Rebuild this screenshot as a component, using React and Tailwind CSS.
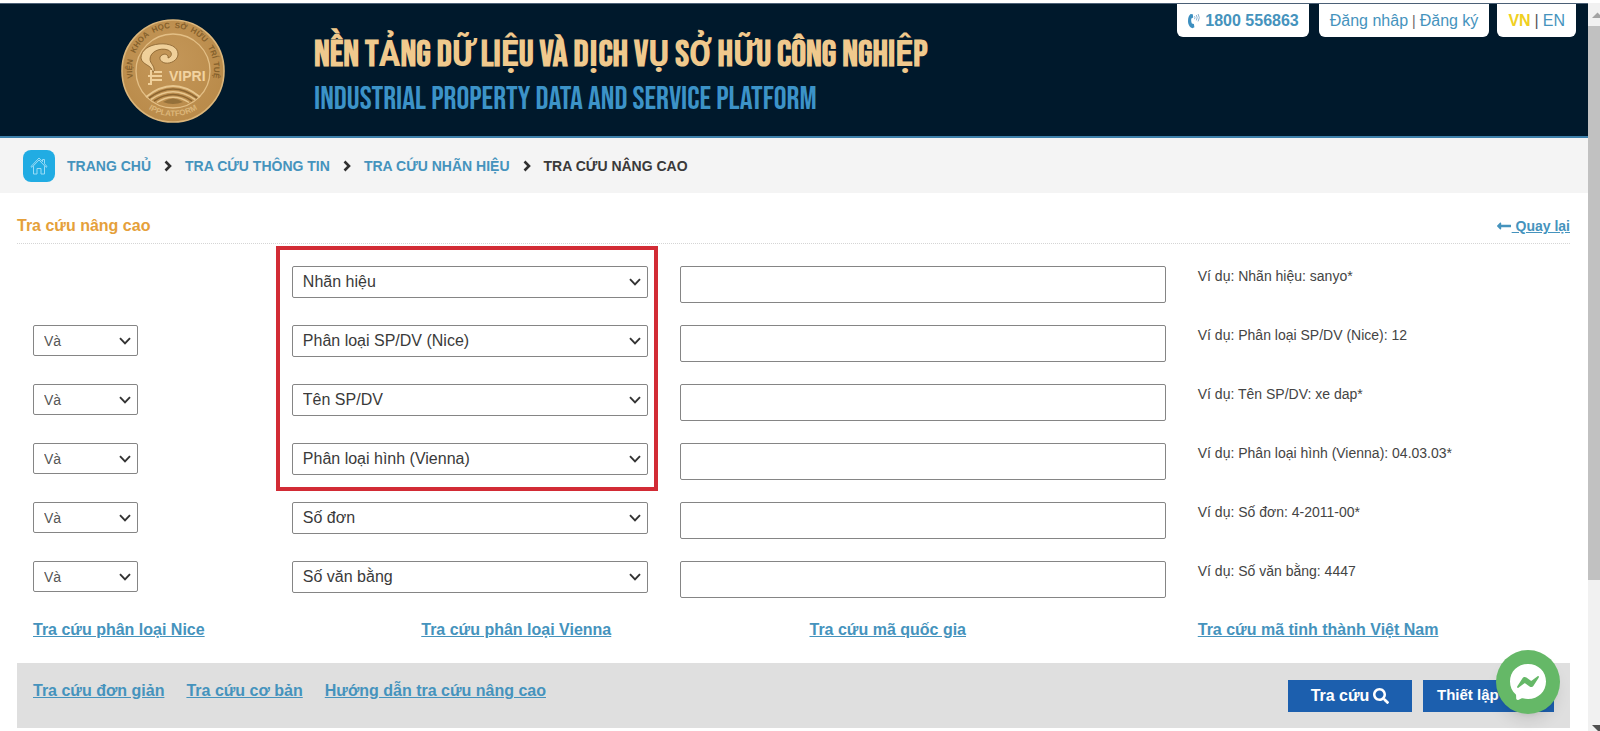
import React from "react";
import { FaLongArrowAltLeft, FaSearch, FaUndo } from "react-icons/fa";

const fields = ["Nhãn hiệu", "Phân loại SP/DV (Nice)", "Tên SP/DV", "Phân loại hình (Vienna)", "Số đơn", "Số văn bằng"];

const examples = [
  "Ví dụ: Nhãn hiệu: sanyo*",
  "Ví dụ: Phân loại SP/DV (Nice): 12",
  "Ví dụ: Tên SP/DV: xe dap*",
  "Ví dụ: Phân loại hình (Vienna): 04.03.03*",
  "Ví dụ: Số đơn: 4-2011-00*",
  "Ví dụ: Số văn bằng: 4447",
];

const lookups = ["Tra cứu phân loại Nice", "Tra cứu phân loại Vienna", "Tra cứu mã quốc gia", "Tra cứu mã tỉnh thành Việt Nam"];

const crumbs = ["TRANG CHỦ", "TRA CỨU THÔNG TIN", "TRA CỨU NHÃN HIỆU"];

const modes = ["Tra cứu đơn giản", "Tra cứu cơ bản", "Hướng dẫn tra cứu nâng cao"];

const sealWords = [
  ["VIỆN", "0%"],
  ["KHOA", "17%"],
  ["HỌC", "36%"],
  ["SỞ", "51%"],
  ["HỮU", "62%"],
  ["TRÍ", "78%"],
  ["TUỆ", "89%"],
];

function Seal() {
  return (
    <svg viewBox="0 0 104 104" className="size-[104px]" role="img" aria-label="VIPRI">
      <defs>
        <radialGradient id="bronze" cx="45%" cy="40%" r="65%">
          <stop offset="0" stopColor="#c49759" />
          <stop offset="1" stopColor="#b98a49" />
        </radialGradient>
        <path id="arcTop" d="M12 59 A41 41 0 1 1 92 59" />
        <path id="arcBottom" d="M22 86 A46 46 0 0 0 82 86" />
      </defs>
      <circle cx="52" cy="52" r="51" fill="url(#bronze)" stroke="#dcb67a" strokeWidth="1.6" />
      <circle cx="52" cy="52" r="37" fill="none" stroke="#e3bf86" strokeWidth="1.3" />
      <g fontFamily="Liberation Sans, Arial, sans-serif" fontWeight="700">
        {sealWords.map(([word, offset]) => (
          <text key={word} fontSize="8" fill="#86612c">
            <textPath href="#arcTop" startOffset={offset}>
              {word}
            </textPath>
          </text>
        ))}
        <text fontSize="8" fill="#dcb679">
          <textPath href="#arcBottom" startOffset="50%" textAnchor="middle">
            IPPLATFORM
          </textPath>
        </text>
        <text x="48" y="62" fontSize="14" fill="#f2d3a0">
          VIPRI
        </text>
      </g>
      <path
        d="M31 52 C31 46 21 46 20 39 C20 31 28 26 38 25 C49 24 57 28 57 35 C57 41 50 45 44 44 C39 43 37 38 41 36 C44 34 48 36 47 39 C51 38 52 33 47 31 C39 28 29 33 29 40 C29 45 34 46 33 53 Z"
        fill="#f0d09a"
        stroke="#85602d"
        strokeWidth="0.8"
      />
      <path d="M30 51 V65 M33 53 H41 M27 57 H41 M30 61 H41 M27 65 H31" fill="none" stroke="#f0d09a" strokeWidth="2" />
      <path d="M25 78 Q52 56 79 78" fill="none" stroke="#e8c78f" strokeWidth="1.8" />
      <path d="M28 79 Q52 61 76 79" fill="none" stroke="#8a6430" strokeWidth="1.6" />
      <path d="M30 80.500 Q52 65 74 80.500" fill="none" stroke="#e8c78f" strokeWidth="1.6" />
      <path d="M33 82 Q52 69 71 82" fill="none" stroke="#8a6430" strokeWidth="1.6" />
      <path d="M36 83.500 Q52 73 68 83.500" fill="none" stroke="#e8c78f" strokeWidth="1.4" />
      <path d="M42 83 Q52 76 62 83 Q52 87 42 83" fill="#94703a" />
    </svg>
  );
}

function HomeIcon() {
  return (
    <svg viewBox="0 0 20 20" className="size-5" fill="none" stroke="#9adcf6" strokeWidth="1" aria-hidden="true">
      <path d="M2 10.5 L10 2 L13.5 5.7 V3.5 H15.5 V7.8 L18 10.5 L17 11.3 L10 4 L3 11.3 Z" />
      <path d="M4.5 10.2 V18 H8 V12.5 H12 V18 H15.5 V10.2" />
    </svg>
  );
}

function PhoneIcon() {
  return (
    <svg viewBox="0 0 14 16" className="h-4 w-3.5" fill="none" aria-hidden="true">
      <path
        d="M3.600 1 L5.800 1.300 L6.200 4.600 L4.300 5.600 C4 7.400 4.200 9 4.900 10.600 L6.900 10.900 L7.400 14.200 L5.400 15.200 C2.600 14.600 1 11.300 1 8 C1 4.700 1.900 2.200 3.600 1 Z"
        fill="#3d8fc0"
      />
      <path d="M7.500 3.200 Q8.500 4.700 7.500 6.200 M9.300 2 Q11 4.700 9.300 7.400 M11.100 1 Q13.500 4.700 11.100 8.400" stroke="#7fa8cb" strokeWidth="0.9" />
    </svg>
  );
}

function Separator() {
  return (
    <svg viewBox="0 0 8 12" className="mx-[13px] h-3 w-2" fill="none" stroke="#2f2f2f" strokeWidth="2.6" aria-hidden="true">
      <path d="M1.500 1.500 L6 6 L1.500 10.500" />
    </svg>
  );
}

function Caret() {
  return (
    <svg viewBox="0 0 12 8" className="pointer-events-none absolute top-1/2 right-[7px] h-2 w-3 -translate-y-1/2" aria-hidden="true">
      <path d="M1 1.200 L6 6.400 L11 1.200" fill="none" stroke="#333" strokeWidth="1.9" />
    </svg>
  );
}

function Select({ label, options, value, className }) {
  return (
    <div className={`relative ${className}`}>
      <select
        aria-label={label}
        defaultValue={value}
        className="size-full appearance-none rounded-xs border border-[#858585] bg-white pr-6 pl-2.5"
      >
        {options.map((o) => (
          <option key={o}>{o}</option>
        ))}
      </select>
      <Caret />
    </div>
  );
}

function Header() {
  return (
    <header className="relative h-[135px] border-y border-t-[#4b6076] border-b-2 border-b-[#3d80ab] bg-[#00192c]">
      <div className="flex items-center pt-[15px] pl-[121px]">
        <Seal />
        <div className="ml-[89px] flex flex-col pt-3 whitespace-nowrap font-['Bebas_Neue','Liberation_Sans_Narrow','Roboto_Condensed','Liberation_Sans',sans-serif]">
          <h1 className="text-[37px] leading-[46px] font-bold text-[#f0c98d]">NỀN TẢNG DỮ LIỆU VÀ DỊCH VỤ SỞ HỮU CÔNG NGHIỆP</h1>
          <p className="text-[32px] leading-[44px] text-[#3c93c8]">INDUSTRIAL PROPERTY DATA AND SERVICE PLATFORM</p>
        </div>
      </div>
      <div className="absolute top-0 right-3 flex gap-2 text-base text-[#4593bd]">
        <a href="#phone" className="mr-0.5 flex h-[33px] items-center gap-1 rounded-b-md bg-white px-2.5 font-bold">
          <PhoneIcon />
          1800 556863
        </a>
        <div className="flex h-[33px] items-center gap-1 rounded-b-md bg-white px-[11px]">
          <a href="#login">Đăng nhâp</a>
          <span className="text-sm text-[#666]">|</span>
          <a href="#register">Đăng ký</a>
        </div>
        <div className="flex h-[33px] items-center gap-1 rounded-b-md bg-white px-[11px]">
          <a href="#vn" className="font-bold text-[#f0d022]">VN</a>
          <span className="text-[#555]">|</span>
          <a href="#en">EN</a>
        </div>
      </div>
    </header>
  );
}

function Breadcrumb() {
  return (
    <nav aria-label="Breadcrumb" className="flex h-[55px] items-center bg-[#f4f4f4] pl-[23px] text-sm font-bold text-[#4593bd]">
      <a href="#home" aria-label="Trang chủ" className="mr-3 flex size-8 items-center justify-center rounded-lg bg-[#21ace3]">
        <HomeIcon />
      </a>
      {crumbs.map((c) => (
        <React.Fragment key={c}>
          <a href="#crumb">{c}</a>
          <Separator />
        </React.Fragment>
      ))}
      <span className="text-[#3a3a3a]">TRA CỨU NÂNG CAO</span>
    </nav>
  );
}

function Scrollbar() {
  return (
    <div aria-hidden="true" className="flex w-3 shrink-0 flex-col bg-[#f1f1f1]">
      <svg viewBox="0 0 12 23" className="h-[23px] w-3 shrink-0">
        <path d="M4 15 L9.500 9.500 L12 12 V15 Z" fill="#a3a3a3" />
      </svg>
      <div className="h-[554px] bg-[#c1c1c1]" />
      <svg viewBox="0 0 12 7" className="mt-auto h-[7px] w-3 shrink-0">
        <path d="M4 1 H12 V7 H10 Z" fill="#505050" />
      </svg>
    </div>
  );
}

export default function App() {
  return (
    <div className="flex min-h-screen flex-col bg-white pt-[3px] font-['Liberation_Sans',Arial,sans-serif] text-[#444]">
      <div className="flex grow">
        <div className="min-w-0 grow">
          <Header />
          <Breadcrumb />
          <main className="mr-[18px] ml-[17px]">
            <div className="flex h-[51px] items-center justify-between border-b border-dotted border-[#d5d5d5] pt-4">
              <h2 className="font-bold text-[#e5a03a]">Tra cứu nâng cao</h2>
              <a href="#back" className="flex items-center text-sm font-bold text-[#4593bd]">
                <FaLongArrowAltLeft className="size-4" />
                <span className="whitespace-pre underline"> Quay lại</span>
              </a>
            </div>
            <form onSubmit={(e) => e.preventDefault()}>
              <div className="relative flex flex-col gap-[22px] pt-[22px]">
                {fields.map((f, i) => (
                  <div key={f} className="grid grid-cols-12">
                    <div className="col-span-2 px-4">
                      {i > 0 && <Select label="Toán tử" options={["Và", "Hoặc"]} value="Và" className="h-[31px] w-[105px] text-sm text-[#555]" />}
                    </div>
                    <div className="col-span-3 px-4">
                      <Select label="Trường tra cứu" options={fields} value={f} className="h-8 text-base text-[#3a3a3a]" />
                    </div>
                    <div className="col-span-4 px-4">
                      <input type="text" aria-label={f} className="h-[37px] w-full rounded-xs border border-[#858585] bg-white px-2.5" />
                    </div>
                    <p className="col-span-3 px-4 text-sm">{examples[i]}</p>
                  </div>
                ))}
                <div className="pointer-events-none absolute top-0.5 left-1/6 h-[245px] w-[calc(25%-6px)] border-4 border-[#d22b35]" />
              </div>
              <div className="mt-5 grid grid-cols-4 font-bold text-[#4593bd]">
                {lookups.map((l) => (
                  <a key={l} href="#lookup" className="px-4 underline">
                    {l}
                  </a>
                ))}
              </div>
              <div className="mt-[21px] flex h-[65px] items-center justify-between bg-[#dfdfdf] px-4">
                <div className="flex gap-[22px] pb-2.5 font-bold text-[#4593bd]">
                  {modes.map((m) => (
                    <a key={m} href="#mode" className="underline">
                      {m}
                    </a>
                  ))}
                </div>
                <div className="flex gap-[11px] font-bold text-white">
                  <button type="submit" className="flex h-8 w-[124px] items-center justify-center gap-1 bg-[#1c5fae]">
                    Tra cứu <FaSearch className="size-4" />
                  </button>
                  <button type="reset" className="flex h-8 w-[131px] items-center gap-1 bg-[#1c5fae] pl-3.5 text-[15px]">
                    Thiết lập lại <FaUndo className="size-3" />
                  </button>
                </div>
              </div>
            </form>
          </main>
        </div>
        <Scrollbar />
      </div>
      <button
        type="button"
        aria-label="Messenger"
        className="fixed right-10 bottom-[17px] flex size-16 items-center justify-center rounded-full bg-[#65b867] shadow-lg"
      >
        <svg viewBox="0 0 38 38" className="size-[38px]" aria-hidden="true">
          <path
            d="M19 1 C8.600 1 1 8.500 1 18.500 C1 23.700 3.100 28.200 6.600 31.300 C6.900 31.600 7.100 32 7.100 32.400 L7.200 35.600 C7.200 36.700 8.300 37.300 9.200 36.900 L12.800 35.300 C13.100 35.200 13.500 35.200 13.800 35.300 C15.400 35.700 17.200 36 19 36 C29.400 36 37 28.500 37 18.500 C37 8.500 29.400 1 19 1 Z"
            fill="#fff"
          />
          <path
            d="M8.200 23.600 L13.500 15.200 C14.300 13.900 16.100 13.500 17.400 14.500 L21.600 17.600 C22 17.900 22.500 17.900 22.900 17.600 L28.600 13.300 C29.300 12.700 30.300 13.600 29.800 14.400 L24.500 22.800 C23.700 24.100 21.900 24.500 20.600 23.500 L16.400 20.400 C16 20.100 15.500 20.100 15.100 20.400 L9.400 24.700 C8.700 25.300 7.700 24.400 8.200 23.600 Z"
            fill="#65b867"
          />
        </svg>
      </button>
    </div>
  );
}
